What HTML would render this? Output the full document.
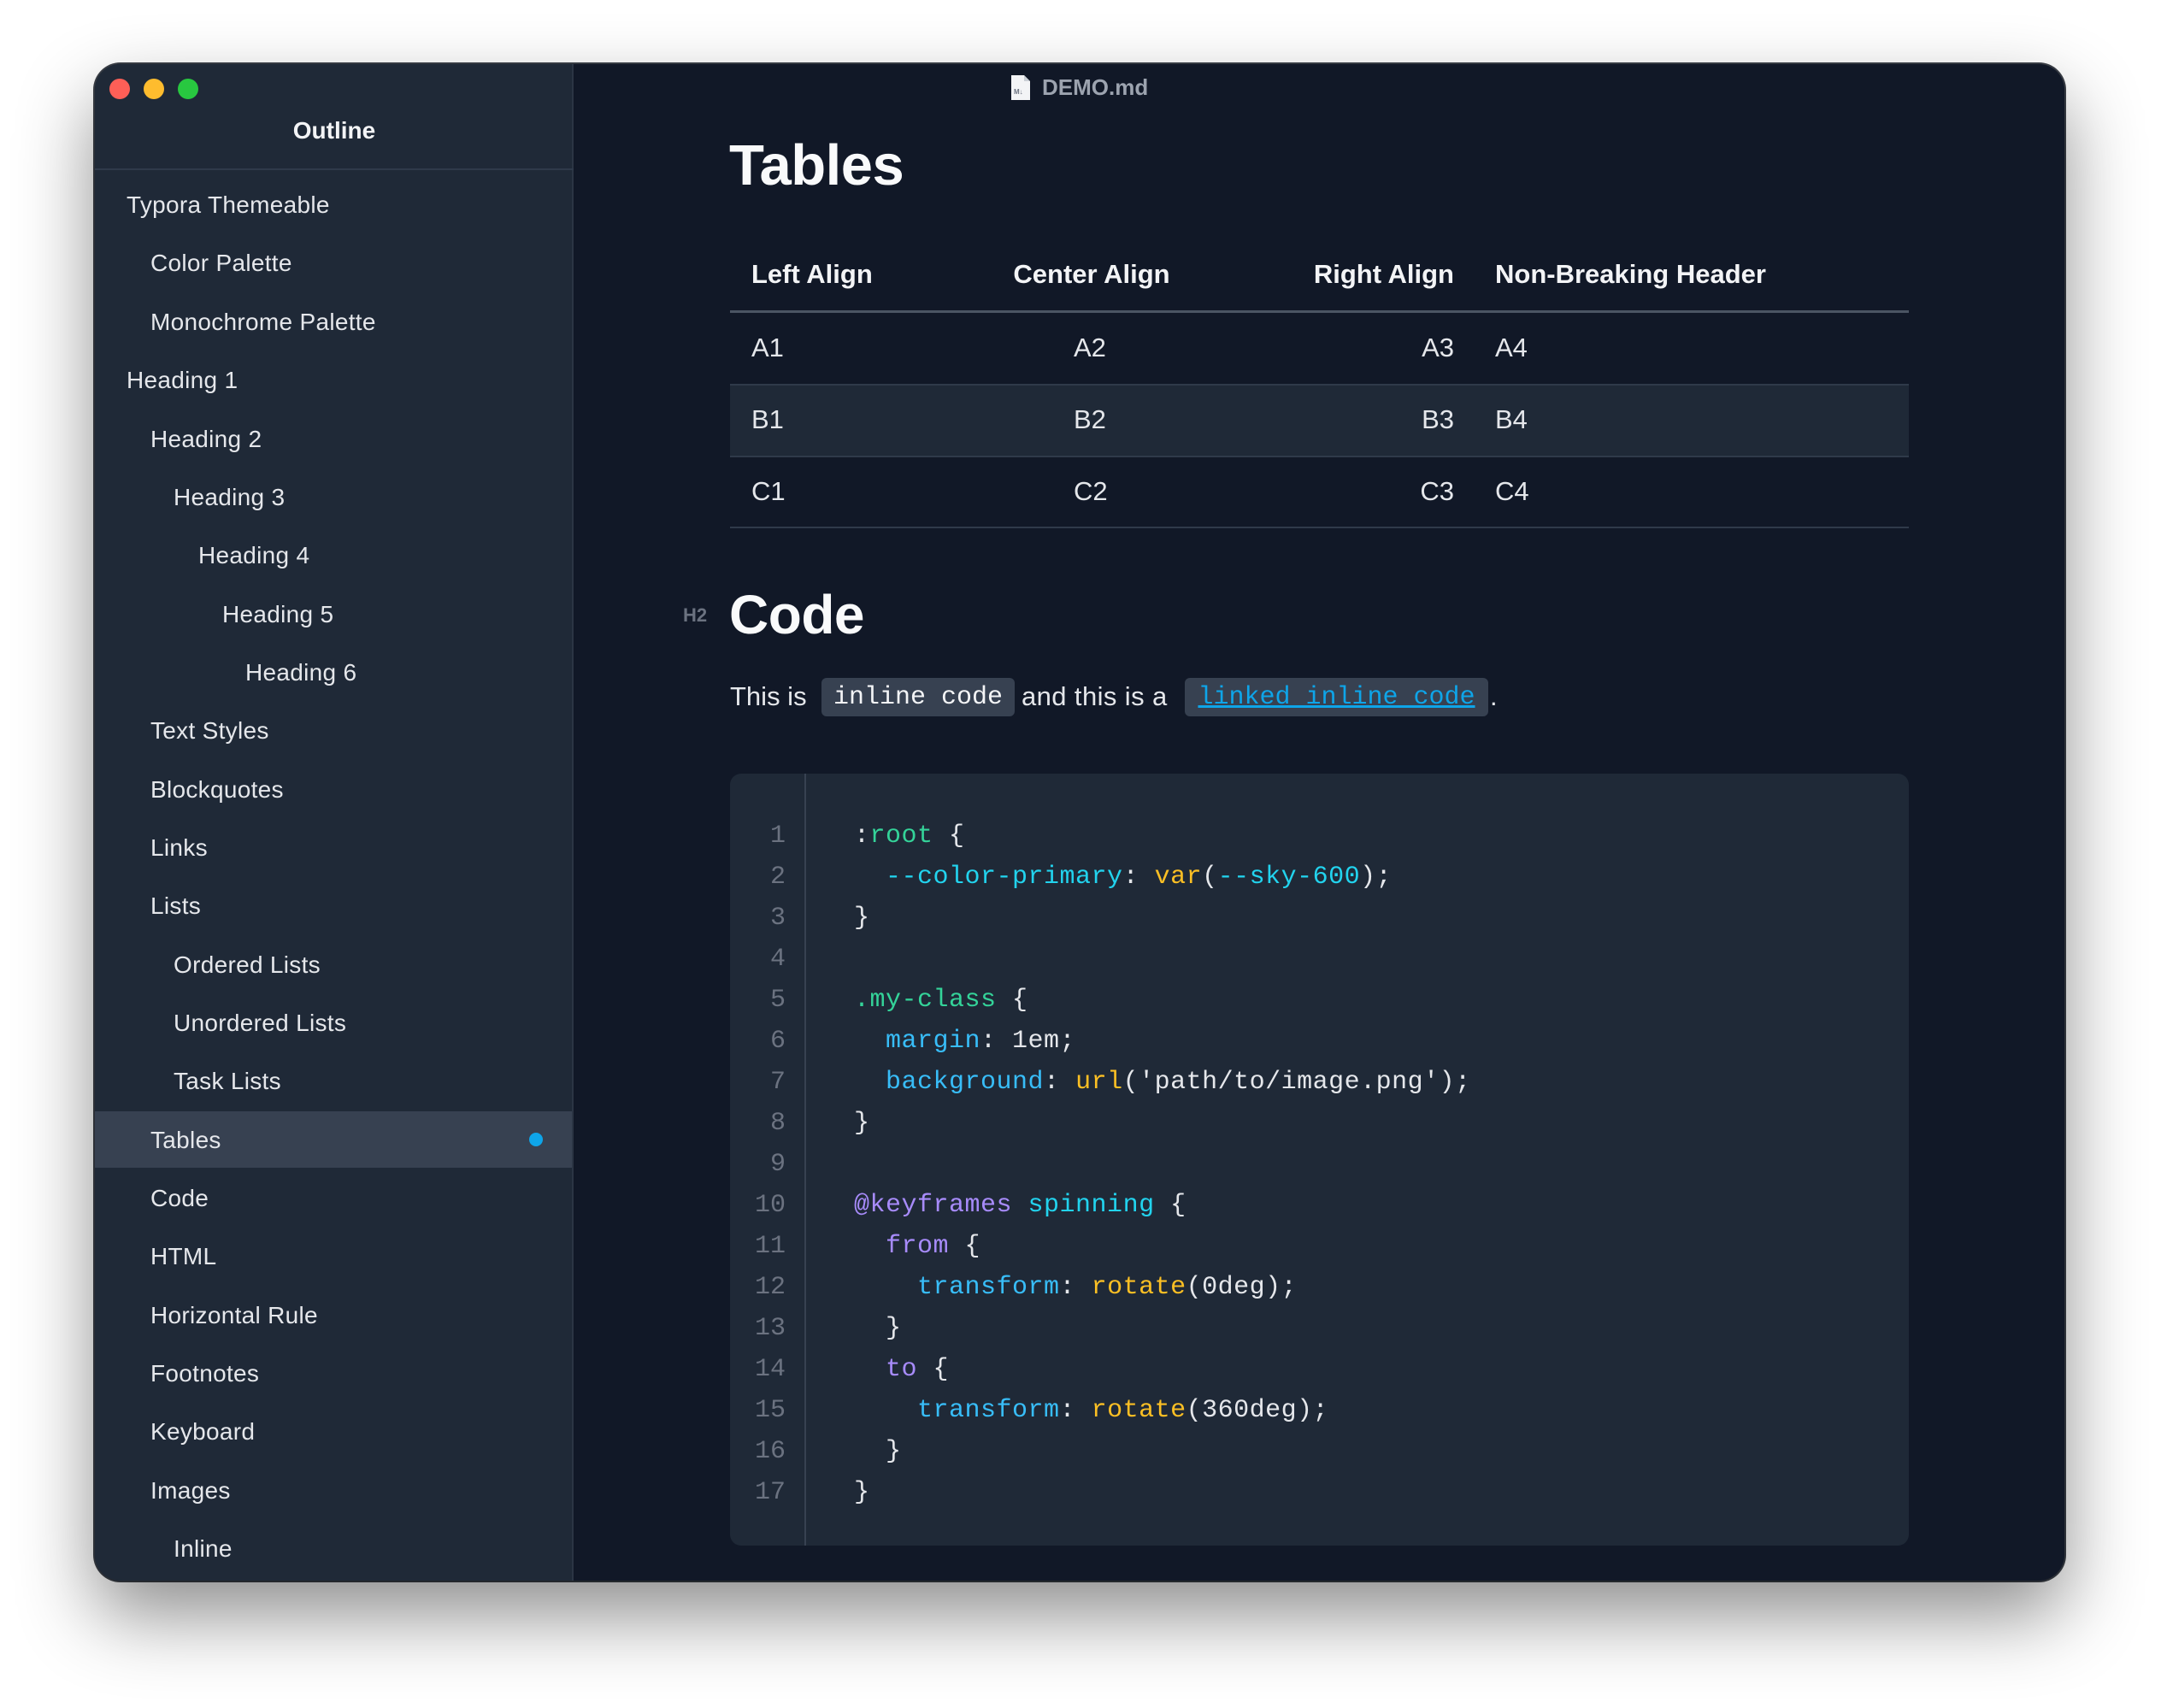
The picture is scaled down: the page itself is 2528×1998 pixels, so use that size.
<!DOCTYPE html>
<html><head><meta charset="utf-8"><style>
*{margin:0;padding:0;box-sizing:border-box}
body{width:2528px;height:1998px;background:#fff;position:relative;overflow:hidden;font-family:"Liberation Sans",sans-serif}
.win{position:absolute;left:111px;top:75px;width:2304px;height:1774px;border-radius:30px;background:#111827;overflow:hidden;box-shadow:0 40px 90px rgba(0,0,0,.45),0 0 0 2px #3a3f47}
.side{position:absolute;left:0;top:0;width:560px;height:100%;background:#1f2937;border-right:2px solid #2b3544}
.dot{position:absolute;top:17px;width:24px;height:24px;border-radius:50%}
.ot{position:absolute;top:62px;left:0;width:560px;text-align:center;color:#f3f4f6;font-size:28px;font-weight:bold}
.hsep{position:absolute;top:122px;left:0;width:560px;height:2px;background:#2f3a4a}
.it{position:absolute;color:#e5e7eb;font-size:28px;line-height:68px;height:68px;letter-spacing:0.3px}
.act{position:absolute;left:0;top:1225px;width:558px;height:66px;background:#374151}
.abs{position:absolute}
.mono{font-family:"Liberation Mono",monospace}
.cell{position:absolute;color:#e5e7eb;font-size:31px}
.th{position:absolute;color:#f3f4f6;font-size:31px;font-weight:bold}
.ln{position:absolute;left:0;width:808px;text-align:right;color:#6b7280;font-size:30px}
.cl{position:absolute;left:888px;color:#e5e7eb;font-size:30px;white-space:pre;letter-spacing:0.5px}
.g{color:#34d399}.c{color:#22d3ee}.b{color:#38bdf8}.y{color:#fbbf24}.p{color:#a78bfa}
</style></head><body>
<div class="win">
 <div class="side">
  <div class="dot" style="left:17px;background:#fe5f57"></div>
  <div class="dot" style="left:57px;background:#febc2e"></div>
  <div class="dot" style="left:97px;background:#28c840"></div>
  <div class="ot">Outline</div>
  <div class="hsep"></div>
  <div class="act"></div>
  <div class="abs" style="left:508px;top:1250px;width:16px;height:16px;border-radius:50%;background:#0ea5e9"></div>
  <div class="it" style="left:37px;top:131px">Typora Themeable</div>
  <div class="it" style="left:65px;top:199px">Color Palette</div>
  <div class="it" style="left:65px;top:268px">Monochrome Palette</div>
  <div class="it" style="left:37px;top:336px">Heading 1</div>
  <div class="it" style="left:65px;top:405px">Heading 2</div>
  <div class="it" style="left:92px;top:473px">Heading 3</div>
  <div class="it" style="left:121px;top:541px">Heading 4</div>
  <div class="it" style="left:149px;top:610px">Heading 5</div>
  <div class="it" style="left:176px;top:678px">Heading 6</div>
  <div class="it" style="left:65px;top:746px">Text Styles</div>
  <div class="it" style="left:65px;top:815px">Blockquotes</div>
  <div class="it" style="left:65px;top:883px">Links</div>
  <div class="it" style="left:65px;top:951px">Lists</div>
  <div class="it" style="left:92px;top:1020px">Ordered Lists</div>
  <div class="it" style="left:92px;top:1088px">Unordered Lists</div>
  <div class="it" style="left:92px;top:1156px">Task Lists</div>
  <div class="it" style="left:65px;top:1225px">Tables</div>
  <div class="it" style="left:65px;top:1293px">Code</div>
  <div class="it" style="left:65px;top:1361px">HTML</div>
  <div class="it" style="left:65px;top:1430px">Horizontal Rule</div>
  <div class="it" style="left:65px;top:1498px">Footnotes</div>
  <div class="it" style="left:65px;top:1566px">Keyboard</div>
  <div class="it" style="left:65px;top:1635px">Images</div>
  <div class="it" style="left:92px;top:1703px">Inline</div>
 </div>
 <svg class="abs" style="left:1072px;top:13px" width="22" height="29" viewBox="0 0 22 29"><path d="M0 0H15L22 7V29H0Z" fill="#f3f4f6"/><path d="M15 0V7H22" fill="#cbd0d6"/><text x="3" y="22" font-size="8" font-family="Liberation Sans" font-weight="bold" fill="#6b7280">M↓</text></svg>
 <div class="abs" style="left:1108px;top:12px;color:#9ca3af;font-size:26px;font-weight:bold">DEMO.md</div>
 <div class="abs" style="left:742px;top:80px;color:#f9fafb;font-size:67px;font-weight:bold;letter-spacing:-0.5px">Tables</div>
 <div class="th" style="left:768px;top:228px">Left Align</div>
 <div class="th" style="left:1070px;top:228px;width:192px;text-align:center">Center Align</div>
 <div class="th" style="left:1300px;top:228px;width:290px;text-align:right">Right Align</div>
 <div class="th" style="left:1638px;top:228px">Non-Breaking Header</div>
 <div class="abs" style="left:743px;top:288px;width:1379px;height:3px;background:#4b5563"></div>
 <div class="abs" style="left:743px;top:374px;width:1379px;height:2px;background:#2f3a4a"></div>
 <div class="abs" style="left:743px;top:376px;width:1379px;height:82px;background:#1f2937"></div>
 <div class="abs" style="left:743px;top:458px;width:1379px;height:2px;background:#2f3a4a"></div>
 <div class="abs" style="left:743px;top:541px;width:1379px;height:2px;background:#2f3a4a"></div>
 <div class="cell" style="left:768px;top:314px">A1</div><div class="cell" style="left:1145px;top:314px">A2</div><div class="cell" style="left:1500px;top:314px;width:90px;text-align:right">A3</div><div class="cell" style="left:1638px;top:314px">A4</div>
 <div class="cell" style="left:768px;top:398px">B1</div><div class="cell" style="left:1145px;top:398px">B2</div><div class="cell" style="left:1500px;top:398px;width:90px;text-align:right">B3</div><div class="cell" style="left:1638px;top:398px">B4</div>
 <div class="cell" style="left:768px;top:482px">C1</div><div class="cell" style="left:1145px;top:482px">C2</div><div class="cell" style="left:1500px;top:482px;width:90px;text-align:right">C3</div><div class="cell" style="left:1638px;top:482px">C4</div>
 <div class="abs" style="left:688px;top:632px;color:#6b7280;font-size:22px;font-weight:bold">H2</div>
 <div class="abs" style="left:742px;top:607px;color:#f9fafb;font-size:64px;font-weight:bold;letter-spacing:-0.5px">Code</div>
 <div class="abs" style="left:743px;top:722px;color:#e5e7eb;font-size:31px;white-space:pre">This is </div>
 <div class="abs mono" style="left:850px;top:718px;width:226px;height:45px;background:#374151;border-radius:6px;color:#f3f4f6;font-size:30px;line-height:47px;text-align:center">inline code</div>
 <div class="abs" style="left:1084px;top:722px;color:#e5e7eb;font-size:31px;letter-spacing:0.4px">and this is a</div>
 <div class="abs mono" style="left:1275px;top:718px;width:355px;height:45px;background:#374151;border-radius:6px;color:#0ea5e9;font-size:30px;line-height:47px;text-align:center;text-decoration:underline">linked inline code</div>
 <div class="abs" style="left:1632px;top:722px;color:#e5e7eb;font-size:31px">.</div>
 <div class="abs" style="left:743px;top:830px;width:1379px;height:903px;background:#1f2937;border-radius:13px"></div>
 <div class="abs" style="left:830px;top:830px;width:2px;height:903px;background:#374151"></div>
 <div class="mono">
  <div class="ln" style="top:886px">1</div><div class="cl" style="top:886px">:<span class="g">root</span> {</div>
  <div class="ln" style="top:934px">2</div><div class="cl" style="top:934px">  <span class="c">--color-primary</span>: <span class="y">var</span>(<span class="c">--sky-600</span>);</div>
  <div class="ln" style="top:982px">3</div><div class="cl" style="top:982px">}</div>
  <div class="ln" style="top:1030px">4</div>
  <div class="ln" style="top:1078px">5</div><div class="cl" style="top:1078px"><span class="g">.my-class</span> {</div>
  <div class="ln" style="top:1126px">6</div><div class="cl" style="top:1126px">  <span class="b">margin</span>: 1em;</div>
  <div class="ln" style="top:1174px">7</div><div class="cl" style="top:1174px">  <span class="b">background</span>: <span class="y">url</span>('path/to/image.png');</div>
  <div class="ln" style="top:1222px">8</div><div class="cl" style="top:1222px">}</div>
  <div class="ln" style="top:1270px">9</div>
  <div class="ln" style="top:1318px">10</div><div class="cl" style="top:1318px"><span class="p">@keyframes</span> <span class="c">spinning</span> {</div>
  <div class="ln" style="top:1366px">11</div><div class="cl" style="top:1366px">  <span class="p">from</span> {</div>
  <div class="ln" style="top:1414px">12</div><div class="cl" style="top:1414px">    <span class="b">transform</span>: <span class="y">rotate</span>(0deg);</div>
  <div class="ln" style="top:1462px">13</div><div class="cl" style="top:1462px">  }</div>
  <div class="ln" style="top:1510px">14</div><div class="cl" style="top:1510px">  <span class="p">to</span> {</div>
  <div class="ln" style="top:1558px">15</div><div class="cl" style="top:1558px">    <span class="b">transform</span>: <span class="y">rotate</span>(360deg);</div>
  <div class="ln" style="top:1606px">16</div><div class="cl" style="top:1606px">  }</div>
  <div class="ln" style="top:1654px">17</div><div class="cl" style="top:1654px">}</div>
 </div>
</div>
</body></html>
